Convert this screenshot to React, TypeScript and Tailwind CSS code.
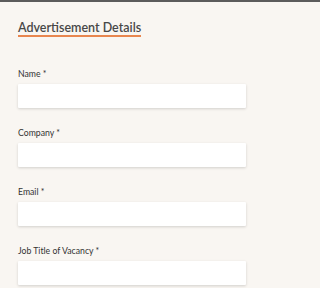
const FIELDS = ['Name', 'Company', 'Email', 'Job Title of Vacancy']

export default function App() {
  return (
    <div className="w-full h-screen overflow-hidden bg-[#f9f6f2] border-t-2 border-[#5c5c5c] font-['Lato','Liberation_Sans',sans-serif]">
      <div className="pl-[18px] pt-[18px]">
        <div className="w-fit">
          <h2 className="text-[12.5px] leading-[15px] font-semibold text-[#484848]">Advertisement Details</h2>
          <div className="h-[1.5px] bg-[#e8864f]" />
        </div>
        <div className="mt-[31.5px] flex flex-col gap-[19px]">
          {FIELDS.map(f => (
            <div key={f} className="flex flex-col">
              <label className="text-[8.7px] leading-[12px] text-[#333] mb-[4px]">{f} *</label>
              <input
                type="text"
                className="w-[228px] h-[24px] bg-white rounded-[1px] shadow-[0_1px_3px_rgba(0,0,0,0.16)] outline-none"
              />
            </div>
          ))}
        </div>
      </div>
    </div>
  )
}
